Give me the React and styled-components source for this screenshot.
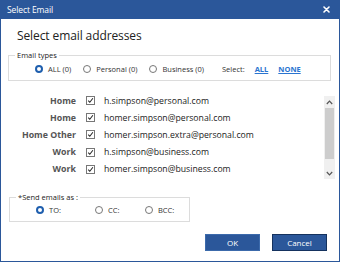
import styled, { createGlobalStyle } from 'styled-components';

const GlobalStyle = createGlobalStyle`
  html, body {
    margin: 0;
    padding: 0;
    background: #ffffff;
  }
  body {
    font-family: "Open Sans", "Noto Sans", sans-serif;
    color: #222;
  }
`;

const blue = '#2b579a';

const emails = [
  { type: 'Home', address: 'h.simpson@personal.com' },
  { type: 'Home', address: 'homer.simpson@personal.com' },
  { type: 'Home Other', address: 'homer.simpson.extra@personal.com' },
  { type: 'Work', address: 'h.simpson@business.com' },
  { type: 'Work', address: 'homer.simpson@business.com' },
];

function Radio({ checked, label }) {
  return (
    <RadioOption>
      <RadioCircle checked={checked} />
      <span>{label}</span>
    </RadioOption>
  );
}

export default function App() {
  return (
    <>
      <GlobalStyle />
      <Window>
        <TitleBar>
          <TitleText>Select Email</TitleText>
          <CloseButton>
            <svg width="7" height="7" viewBox="0 0 7 7">
              <path d="M1 1 L6 6 M6 1 L1 6" stroke="#fff" strokeWidth="1.6" strokeLinecap="round" />
            </svg>
          </CloseButton>
        </TitleBar>
        <Body>
          <Heading>Select email addresses</Heading>
          <Group>
            <Legend>Email types</Legend>
            <TypesRow>
              <Radio checked label="ALL (0)" />
              <Radio label="Personal (0)" />
              <Radio label="Business (0)" />
              <SelectLinks>
                <span>Select:</span>
                <LinkText>ALL</LinkText>
                <LinkText>NONE</LinkText>
              </SelectLinks>
            </TypesRow>
          </Group>
          <ListArea>
            <Rows>
              {emails.map((e) => (
                <Row key={e.address}>
                  <TypeLabel>{e.type}</TypeLabel>
                  <Check>
                    <svg width="9" height="9" viewBox="0 0 9 9">
                      <path d="M1.6 4.6 L3.6 6.8 L7.6 1.6" fill="none" stroke="#222" strokeWidth="1.3" />
                    </svg>
                  </Check>
                  <Email>{e.address}</Email>
                </Row>
              ))}
            </Rows>
            <ScrollBar>
              <ScrollArrow>
                <svg width="7" height="5" viewBox="0 0 7 5">
                  <path d="M0.8 4 L3.5 1.2 L6.2 4" fill="none" stroke="#555" strokeWidth="1.2" />
                </svg>
              </ScrollArrow>
              <Thumb />
              <ScrollArrow>
                <svg width="7" height="5" viewBox="0 0 7 5">
                  <path d="M0.8 1 L3.5 3.8 L6.2 1" fill="none" stroke="#555" strokeWidth="1.2" />
                </svg>
              </ScrollArrow>
            </ScrollBar>
          </ListArea>
          <SendGroup>
            <Legend>*Send emails as :</Legend>
            <SendRow>
              <Radio checked label="TO:" />
              <Radio label="CC:" />
              <Radio label="BCC:" />
            </SendRow>
          </SendGroup>
          <Footer>
            <Button>OK</Button>
            <Button dark>Cancel</Button>
          </Footer>
        </Body>
      </Window>
    </>
  );
}

const Window = styled.div`
  width: 340px;
  height: 262px;
  box-sizing: border-box;
  border: 1px solid ${blue};
  border-top: none;
  display: flex;
  flex-direction: column;
  background: #fff;
`;

const TitleBar = styled.div`
  height: 19px;
  margin: 0 -1px;
  background: ${blue};
  display: flex;
  align-items: center;
  justify-content: space-between;
  padding: 0 10px 0 7px;
`;

const TitleText = styled.span`
  color: #fff;
  font-size: 8.5px;
  letter-spacing: -0.1px;
`;

const CloseButton = styled.span`
  display: flex;
  align-items: center;
`;

const Body = styled.div`
  flex: 1;
  display: flex;
  flex-direction: column;
  padding: 0 1px 0 7px;
`;

const Heading = styled.h1`
  margin: 8px 0 0 9px;
  font-size: 12px;
  font-weight: 400;
  letter-spacing: -0.1px;
  color: #222;
  line-height: 17px;
`;

const Group = styled.fieldset`
  margin: 6px 7px 0 0;
  padding: 4px 0 6px 4px;
  border: 1px solid #dcdcdc;
  min-width: 0;
`;

const SendGroup = styled(Group)`
  width: 181px;
  box-sizing: border-box;
  margin: 13px 0 0 1px;
  padding: 3px 0 6px 4px;
`;

const Legend = styled.legend`
  font-size: 7.5px;
  padding: 0 2px;
  margin-left: 2px;
  color: #222;
  line-height: 10px;
`;

const TypesRow = styled.div`
  display: flex;
  align-items: center;
  gap: 12px;
  padding-left: 22px;
  font-size: 7.5px;
  color: #333;
`;

const RadioOption = styled.label`
  display: flex;
  align-items: center;
  gap: 5px;
  font-size: 7.5px;
  color: #333;
`;

const RadioCircle = styled.span`
  width: 8px;
  height: 8px;
  box-sizing: border-box;
  border-radius: 50%;
  border: ${(p) => (p.checked ? `2.5px solid #1f5fae` : '1px solid #777')};
  background: #fff;
`;

const SelectLinks = styled.div`
  display: flex;
  align-items: center;
  gap: 10px;
  margin-left: 6px;
`;

const LinkText = styled.span`
  color: #2a74d0;
  font-weight: 700;
  text-decoration: underline;
`;

const ListArea = styled.div`
  display: flex;
  height: 87px;
  margin-top: 11px;
`;

const Rows = styled.div`
  flex: 1;
  display: flex;
  flex-direction: column;
`;

const Row = styled.div`
  display: flex;
  align-items: center;
  height: 17.2px;
`;

const TypeLabel = styled.span`
  width: 68px;
  text-align: right;
  font-size: 8.8px;
  font-weight: 700;
  color: #555;
`;

const Check = styled.span`
  width: 9px;
  height: 9px;
  box-sizing: border-box;
  border: 1px solid #777;
  margin: 0 9px 0 10px;
  display: flex;
  align-items: center;
  justify-content: center;
`;

const Email = styled.span`
  font-size: 8.7px;
  color: #222;
`;

const ScrollBar = styled.div`
  width: 11px;
  margin: 4px 3px 0 0;
  background: #f0f0f0;
  display: flex;
  flex-direction: column;
  align-items: center;
`;

const ScrollArrow = styled.div`
  height: 12px;
  display: flex;
  align-items: center;
  justify-content: center;
`;

const Thumb = styled.div`
  width: 9px;
  flex: 1;
  background: #cdcdcd;
  margin-bottom: 8px;
`;

const SendRow = styled.div`
  display: grid;
  grid-template-columns: 59px 50px auto;
  align-items: center;
  padding-left: 22px;
`;

const Footer = styled.div`
  display: flex;
  justify-content: flex-end;
  gap: 12px;
  margin: 12px 11px 0 0;
`;

const Button = styled.button`
  width: 55px;
  height: 17px;
  box-sizing: border-box;
  background: ${blue};
  border: 1px solid ${(p) => (p.dark ? '#15325e' : '#3c6aab')};
  color: #fff;
  font-family: inherit;
  font-size: 8px;
  padding: 0;
`;
